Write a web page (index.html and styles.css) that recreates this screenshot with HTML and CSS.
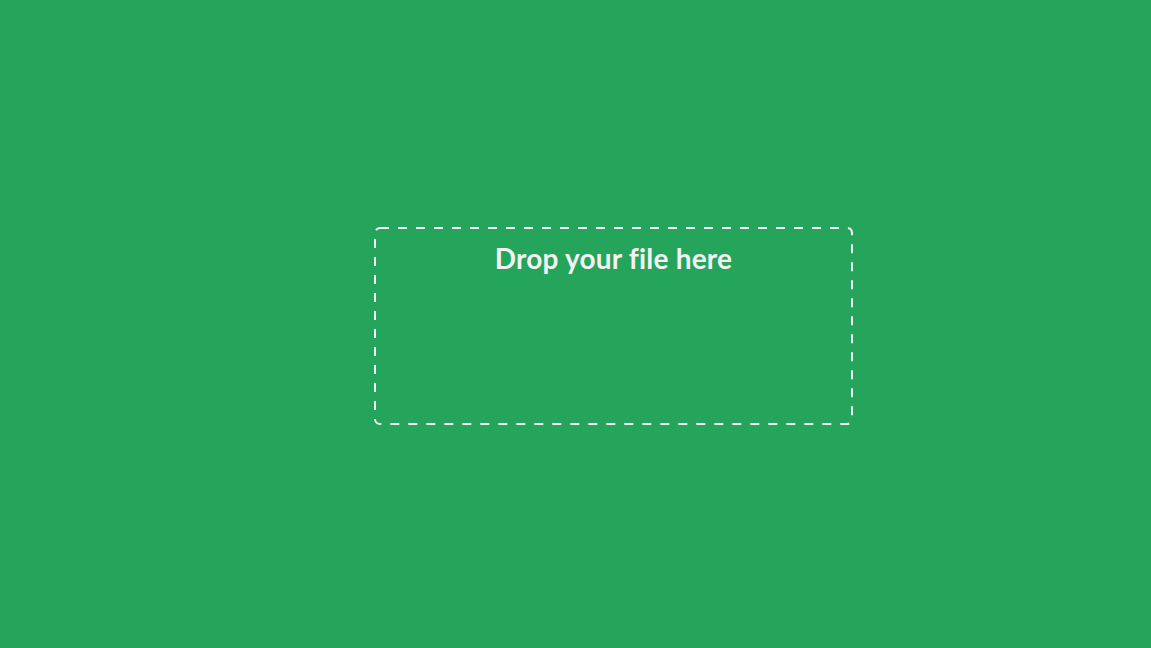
FILE: index.html
```html
<!DOCTYPE html>
<html>
<head>
<meta charset="utf-8">
<link rel="stylesheet" href="styles.css">
</head>
<body>
<main class="page">
  <div class="dropzone">
    <svg class="dash" width="479" height="198" viewBox="0 0 479 198" aria-hidden="true">
      <rect x="1" y="1" width="477" height="196" rx="5" ry="5" fill="none" stroke="#f2f2f2" stroke-width="2" stroke-dasharray="9 9"/>
    </svg>
    <h1 class="title">Drop your file here</h1>
  </div>
</main>
</body>
</html>
```

FILE: styles.css
```css
html, body {
  margin: 0;
  height: 100%;
  background: #25a55b;
}
.page {
  height: 100%;
  display: flex;
  align-items: center;
  justify-content: center;
  padding-left: 76px;
  padding-top: 4px;
  box-sizing: border-box;
}
.dropzone {
  position: relative;
  width: 479px;
  height: 198px;
  box-sizing: border-box;
  display: flex;
  flex-direction: column;
  align-items: center;
}
.dash {
  position: absolute;
  left: 0;
  top: 0;
}
.title {
  margin: 13px 0 0;
  font-family: Lato, sans-serif;
  font-weight: 700;
  font-size: 28px;
  line-height: 36px;
  letter-spacing: 0.2px;
  font-variant-ligatures: none;
  color: #f2f2f2;
}
```
